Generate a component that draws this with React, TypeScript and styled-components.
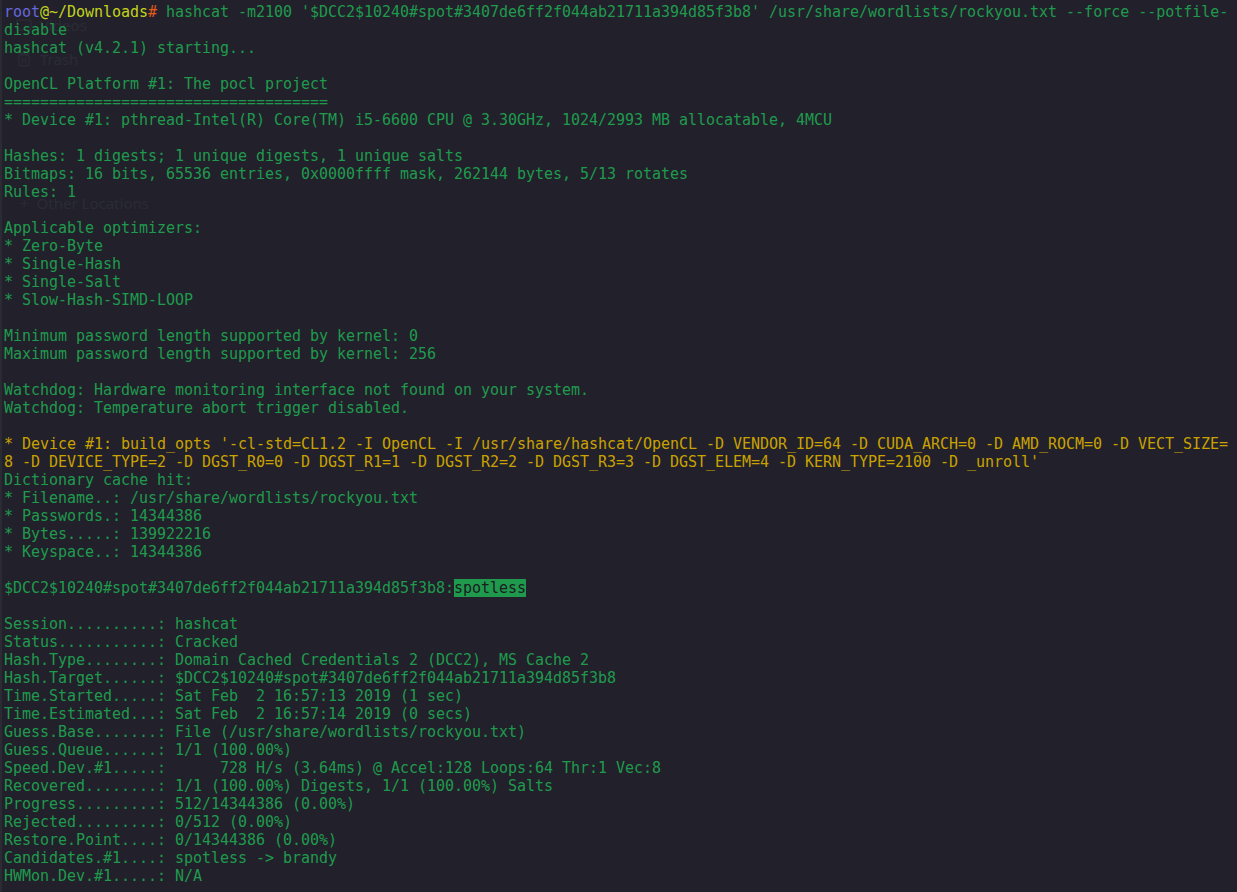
import React from "react";
import styled, { createGlobalStyle } from "styled-components";

const Global = createGlobalStyle`
  html, body { margin: 0; padding: 0; background: #22212b; }
  body { width: 1237px; height: 892px; overflow: hidden; }
`;

const Screen = styled.div`
  position: relative;
  width: 1237px;
  height: 892px;
  background: #22212b;
  box-sizing: border-box;
  padding: 3px 0 0 4px;
  overflow: hidden;
  font-family: "DejaVu Sans Mono", "Liberation Mono", monospace;
  font-size: 15px;
  letter-spacing: -0.03px;
  line-height: 18px;
  color: #1f9a4d;
  &::before {
    content: "";
    position: absolute;
    left: 0;
    top: 0;
    bottom: 0;
    width: 2px;
    background: #2b2b34;
  }
`;

const Output = styled.div`
  position: relative;
  z-index: 1;
  display: flex;
  flex-direction: column;
`;

const Line = styled.div<{ $tone?: "green" | "yellow" }>`
  height: 18px;
  white-space: pre;
  color: ${(p) => (p.$tone === "yellow" ? "#c9a200" : "#1f9a4d")};
`;

const Seg = styled.span<{ $c: string }>`
  color: ${(p) => p.$c};
`;

const Hit = styled.span`
  display: inline-block;
  height: 18px;
  background: #1f9a4d;
  color: #1b1b22;
`;

const Ghost = styled.div<{ $x: number; $y: number }>`
  position: absolute;
  left: ${(p) => p.$x}px;
  top: ${(p) => p.$y}px;
  z-index: 0;
  font-family: "Noto Sans", "DejaVu Sans", sans-serif;
  font-size: 15px;
  letter-spacing: 0;
  color: #2b2b35;
  white-space: pre;
  display: flex;
  align-items: center;
  gap: 8px;
`;

const lines: Array<{ t: string; tone?: "green" | "yellow" }> = [
  { t: "" },
  { t: "disable" },
  { t: "hashcat (v4.2.1) starting..." },
  { t: "" },
  { t: "OpenCL Platform #1: The pocl project" },
  { t: "====================================" },
  { t: "* Device #1: pthread-Intel(R) Core(TM) i5-6600 CPU @ 3.30GHz, 1024/2993 MB allocatable, 4MCU" },
  { t: "" },
  { t: "Hashes: 1 digests; 1 unique digests, 1 unique salts" },
  { t: "Bitmaps: 16 bits, 65536 entries, 0x0000ffff mask, 262144 bytes, 5/13 rotates" },
  { t: "Rules: 1" },
  { t: "" },
  { t: "Applicable optimizers:" },
  { t: "* Zero-Byte" },
  { t: "* Single-Hash" },
  { t: "* Single-Salt" },
  { t: "* Slow-Hash-SIMD-LOOP" },
  { t: "" },
  { t: "Minimum password length supported by kernel: 0" },
  { t: "Maximum password length supported by kernel: 256" },
  { t: "" },
  { t: "Watchdog: Hardware monitoring interface not found on your system." },
  { t: "Watchdog: Temperature abort trigger disabled." },
  { t: "" },
  {
    t: "* Device #1: build_opts '-cl-std=CL1.2 -I OpenCL -I /usr/share/hashcat/OpenCL -D VENDOR_ID=64 -D CUDA_ARCH=0 -D AMD_ROCM=0 -D VECT_SIZE=",
    tone: "yellow",
  },
  {
    t: "8 -D DEVICE_TYPE=2 -D DGST_R0=0 -D DGST_R1=1 -D DGST_R2=2 -D DGST_R3=3 -D DGST_ELEM=4 -D KERN_TYPE=2100 -D _unroll'",
    tone: "yellow",
  },
  { t: "Dictionary cache hit:" },
  { t: "* Filename..: /usr/share/wordlists/rockyou.txt" },
  { t: "* Passwords.: 14344386" },
  { t: "* Bytes.....: 139922216" },
  { t: "* Keyspace..: 14344386" },
  { t: "" },
  { t: "$DCC2$10240#spot#3407de6ff2f044ab21711a394d85f3b8:" },
  { t: "" },
  { t: "Session..........: hashcat" },
  { t: "Status...........: Cracked" },
  { t: "Hash.Type........: Domain Cached Credentials 2 (DCC2), MS Cache 2" },
  { t: "Hash.Target......: $DCC2$10240#spot#3407de6ff2f044ab21711a394d85f3b8" },
  { t: "Time.Started.....: Sat Feb  2 16:57:13 2019 (1 sec)" },
  { t: "Time.Estimated...: Sat Feb  2 16:57:14 2019 (0 secs)" },
  { t: "Guess.Base.......: File (/usr/share/wordlists/rockyou.txt)" },
  { t: "Guess.Queue......: 1/1 (100.00%)" },
  { t: "Speed.Dev.#1.....:      728 H/s (3.64ms) @ Accel:128 Loops:64 Thr:1 Vec:8" },
  { t: "Recovered........: 1/1 (100.00%) Digests, 1/1 (100.00%) Salts" },
  { t: "Progress.........: 512/14344386 (0.00%)" },
  { t: "Rejected.........: 0/512 (0.00%)" },
  { t: "Restore.Point....: 0/14344386 (0.00%)" },
  { t: "Candidates.#1....: spotless -> brandy" },
  { t: "HWMon.Dev.#1.....: N/A" },
];

export default function App() {
  return (
    <Screen>
      <Global />
      <Ghost $x={16} $y={16}>
        <svg width="16" height="14" viewBox="0 0 16 14">
          <rect x="1" y="2" width="14" height="10" rx="1.5" fill="none" stroke="#2b2b35" strokeWidth="1.4" />
        </svg>
        <span>Videos</span>
      </Ghost>
      <Ghost $x={16} $y={50}>
        <svg width="16" height="16" viewBox="0 0 16 16">
          <rect x="3" y="4" width="10" height="11" rx="1.5" fill="none" stroke="#2b2b35" strokeWidth="1.4" />
          <path d="M2 3h12M6 1.5h4M6.5 7v5M9.5 7v5" stroke="#2b2b35" strokeWidth="1.4" fill="none" />
        </svg>
        <span>Trash</span>
      </Ghost>
      <Ghost $x={20} $y={194}>
        <span>+</span>
        <span>Other Locations</span>
      </Ghost>
      <Output>
        {lines.map((l, i) => {
          if (i === 0) {
            return (
              <Line key={i}>
                <Seg $c="#6767dc">root</Seg>
                <Seg $c="#c2d41c">@~/Downloads</Seg>
                <Seg $c="#e35b1d"># </Seg>
                hashcat -m2100 '$DCC2$10240#spot#3407de6ff2f044ab21711a394d85f3b8' /usr/share/wordlists/rockyou.txt --force --potfile-
              </Line>
            );
          }
          if (i === 32) {
            return (
              <Line key={i}>
                {l.t}
                <Hit>spotless</Hit>
              </Line>
            );
          }
          return (
            <Line key={i} $tone={l.tone}>
              {l.t}
            </Line>
          );
        })}
      </Output>
    </Screen>
  );
}
